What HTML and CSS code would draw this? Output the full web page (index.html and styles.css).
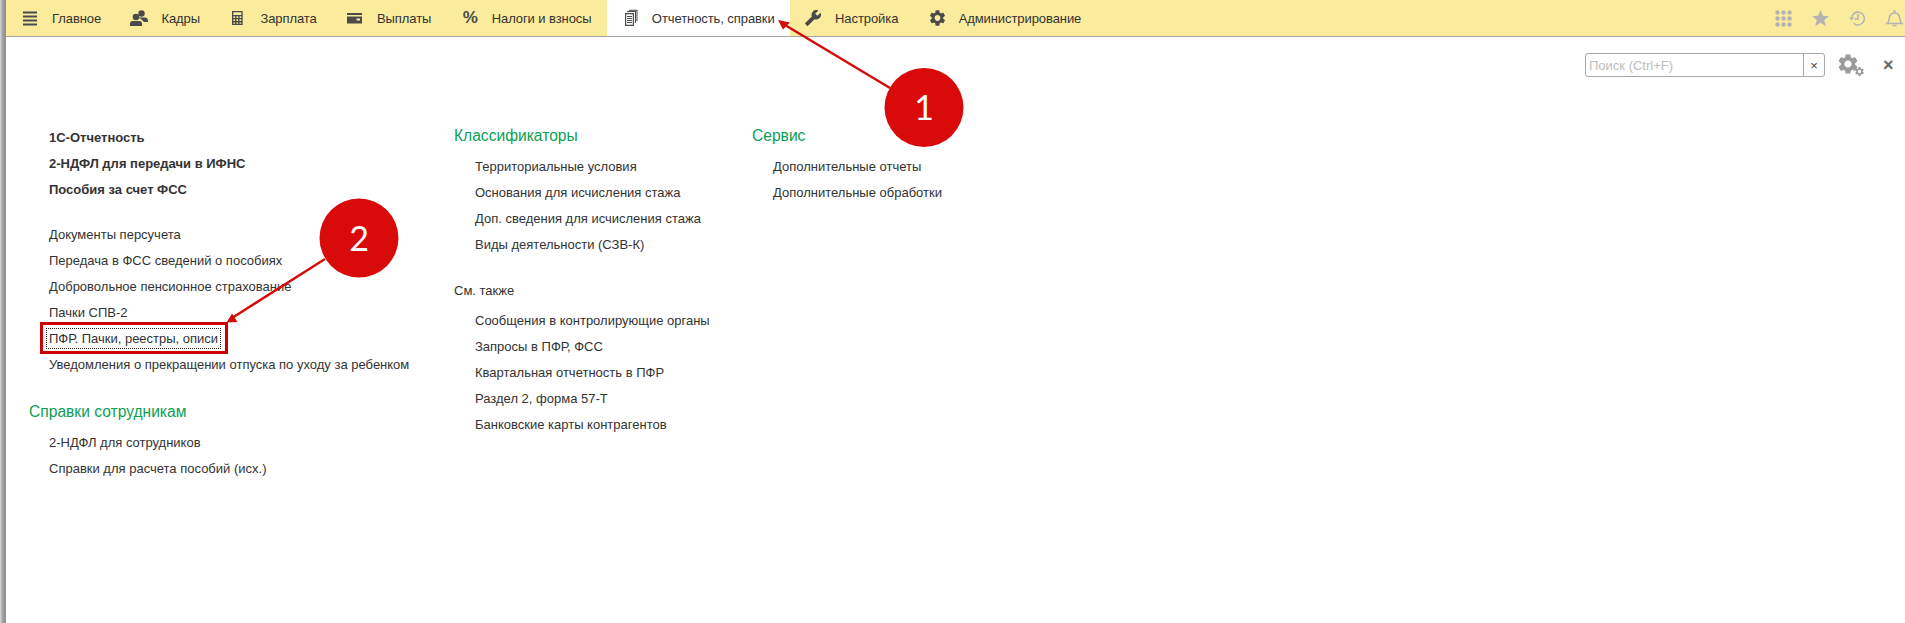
FILE: index.html
```html
<!DOCTYPE html>
<html lang="ru">
<head>
    <meta charset="UTF-8">
    <title>Отчетность, справки</title>
    <link rel="stylesheet" href="styles.css">
</head>
<body>
    <div class="side-strip"></div>
    <div class="app">
        <header class="topbar">
            <nav class="sections">
                <a class="section" href="#">
                    <svg class="section-icon" viewBox="2 0 16 16"><path d="M1 1.5h14v2H1zM1 5.5h14v2H1zM1 9.5h14v2H1zM1 13.5h14v2H1z"/></svg>
                    Главное
                </a>
                <a class="section" href="#">
                    <svg class="section-icon" viewBox="3 0 16 16"><circle cx="11.5" cy="3.5" r="3.2"/><path d="M8 7.5h7c2 0 3 1.5 3 3v1.5h-4L11 9z"/><circle cx="6" cy="7" r="3.3"/><path d="M0 16v-2.5C0 12 1 11 2.5 11h7c1.5 0 2.5 1 2.5 2.5V16z"/></svg>
                    Кадры
                </a>
                <a class="section" href="#">
                    <svg class="section-icon" viewBox="2 -1 18 18"><path fill-rule="evenodd" d="M2 0h12v16H2zM3.5 1.5v3h9v-3zM3.5 6v2h2V6zm3.5 0v2h2V6zm3.5 0v2h2V6zM3.5 9.5v2h2v-2zm3.5 0v2h2v-2zm3.5 0v2h2v-2zM3.5 13v1.5h2V13zm3.5 0v1.5h2V13zm3.5 0v1.5h2V13z"/></svg>
                    Зарплата
                </a>
                <a class="section" href="#">
                    <svg class="section-icon" viewBox="2 0 16 16"><path fill-rule="evenodd" d="M0 3h15v2H0zM0 6.500h15V13.500H0zM9.500 8.500v2h3.500v-2z"/></svg>
                    Выплаты
                </a>
                <a class="section" href="#">
                    <span class="section-icon percent">%</span>
                    Налоги и взносы
                </a>
                <a class="section active" href="#">
                    <svg class="section-icon" viewBox="2 0 16 16"><path fill-rule="evenodd" d="M3 3h9v13H3zM4.200 4.200v10.600h6.600V4.200zM5 6h5v1H5zM5 8h5v1H5zM5 10h5v1H5zM5 12h5v1H5z"/><path d="M5 1h9v12h-1V2H5zM7-.2h8.500V11h-1V.8H7z"/></svg>
                    Отчетность, справки
                </a>
                <a class="section" href="#">
                    <svg class="section-icon" viewBox="3.750 1 22 22"><path transform="matrix(-1 0 0 1 24 0)" d="M22.700 19l-9.100-9.100c.9-2.300.4-5-1.500-6.900-2-2-5-2.400-7.400-1.300L9 6 6 9 1.600 4.700C.4 7.100.9 10.100 2.900 12.100c1.900 1.900 4.600 2.400 6.900 1.500l9.100 9.100c.4.4 1 .4 1.400 0l2.300-2.300c.5-.4.5-1.100.1-1.400z"/></svg>
                    Настройка
                </a>
                <a class="section" href="#">
                    <svg class="section-icon" viewBox="3.900 2 20 20"><use href="#gear" width="24" height="24"/></svg>
                    Администрирование
                </a>
            </nav>
            <div class="quick-icons">
                <svg class="quick-icon" viewBox="0 0 17 17"><circle cx="2.500" cy="2.500" r="2.200"/><circle cx="8.500" cy="2.500" r="2.200"/><circle cx="14.500" cy="2.500" r="2.200"/><circle cx="2.500" cy="8.500" r="2.200"/><circle cx="8.500" cy="8.500" r="2.200"/><circle cx="14.500" cy="8.500" r="2.200"/><circle cx="2.500" cy="14.500" r="2.200"/><circle cx="8.500" cy="14.500" r="2.200"/><circle cx="14.500" cy="14.500" r="2.200"/></svg>
                <svg class="quick-icon" viewBox="0 0 17 17"><path d="M8.500 0l2.300 5.800 6.200.4-4.800 3.900 1.600 6.100-5.300-3.400-5.300 3.400 1.600-6.100L0 6.200l6.200-.4z"/></svg>
                <svg class="quick-icon" viewBox="0 0 17 17"><path class="line-icon" d="M2.600 8.500a6.400 6.400 0 1 1 2 4.700"/><path d="M0 7.500h5.200L2.600 10.600z"/><path class="line-icon" d="M9 4v5h-3.500"/></svg>
                <svg class="quick-icon" viewBox="0 0 17 17"><path class="line-icon" d="M1 13.500c1.500-1 2-2.500 2.200-5 .3-3.300 2-5.500 5.300-5.500s5 2.200 5.300 5.500c.2 2.500.7 4 2.200 5zM6.500 15.500h4"/><circle cx="8.500" cy="1.500" r="1.200"/></svg>
            </div>
        </header>

        <main class="page">
            <div class="toolbar">
                <div class="search">
                    <input class="search-input" type="text" placeholder="Поиск (Ctrl+F)">
                    <button class="search-clear" type="button">×</button>
                </div>
                <svg class="settings-icon" viewBox="0 0 26 22">
                    <use href="#gear" x="-2" y="-2" width="24" height="24"/>
                    <use href="#gear" x="16" y="12" width="11" height="11"/>
                </svg>
                <span class="close-page">×</span>
            </div>

            <div class="columns">
                <section class="first-column">
                    <ul class="links main-links">
                        <li><a href="#">1С-Отчетность</a></li>
                        <li><a href="#">2-НДФЛ для передачи в ИФНС</a></li>
                        <li><a href="#">Пособия за счет ФСС</a></li>
                    </ul>
                    <ul class="links">
                        <li><a href="#">Документы персучета</a></li>
                        <li><a href="#">Передача в ФСС сведений о пособиях</a></li>
                        <li><a href="#">Добровольное пенсионное страхование</a></li>
                        <li><a href="#">Пачки СПВ-2</a></li>
                        <li><a class="focused" href="#">ПФР. Пачки, реестры, описи</a></li>
                        <li><a href="#">Уведомления о прекращении отпуска по уходу за ребенком</a></li>
                    </ul>
                    <h3 class="group-title group-next">Справки сотрудникам</h3>
                    <ul class="links">
                        <li><a href="#">2-НДФЛ для сотрудников</a></li>
                        <li><a href="#">Справки для расчета пособий (исх.)</a></li>
                    </ul>
                </section>

                <section>
                    <h3 class="group-title">Классификаторы</h3>
                    <ul class="links">
                        <li><a href="#">Территориальные условия</a></li>
                        <li><a href="#">Основания для исчисления стажа</a></li>
                        <li><a href="#">Доп. сведения для исчисления стажа</a></li>
                        <li><a href="#">Виды деятельности (СЗВ-К)</a></li>
                    </ul>
                    <h4 class="see-also">См. также</h4>
                    <ul class="links">
                        <li><a href="#">Сообщения в контролирующие органы</a></li>
                        <li><a href="#">Запросы в ПФР, ФСС</a></li>
                        <li><a href="#">Квартальная отчетность в ПФР</a></li>
                        <li><a href="#">Раздел 2, форма 57-Т</a></li>
                        <li><a href="#">Банковские карты контрагентов</a></li>
                    </ul>
                </section>

                <section>
                    <h3 class="group-title">Сервис</h3>
                    <ul class="links">
                        <li><a href="#">Дополнительные отчеты</a></li>
                        <li><a href="#">Дополнительные обработки</a></li>
                    </ul>
                </section>
            </div>
        </main>
    </div>

    <!-- red callouts drawn on top of the screenshot -->
    <svg class="callouts" viewBox="0 0 1905 623">
        <rect class="callout-box" x="41.500" y="323.500" width="185" height="29"/>
        <path class="callout-line" d="M890 88L785 25"/>
        <path class="callout-head" d="M778 20L790 22.500L783 29.500z"/>
        <path class="callout-line" d="M325 259L232 318"/>
        <path class="callout-head" d="M226.500 322.500L232 313.500L237.500 322z"/>
        <circle class="callout-dot" cx="924" cy="107.500" r="39.500"/>
        <circle class="callout-dot" cx="359" cy="238" r="39.500"/>
        <text class="callout-num" x="924" y="120">1</text>
        <text class="callout-num" x="359" y="251">2</text>
    </svg>

    <svg class="defs" width="0" height="0">
        <symbol id="gear" viewBox="0 0 24 24"><path d="M19.140 12.940c.04-.3.06-.61.06-.94 0-.32-.02-.64-.07-.94l2.030-1.580c.18-.14.23-.41.12-.61l-1.920-3.320c-.12-.22-.37-.29-.59-.22l-2.390.96c-.5-.38-1.030-.7-1.620-.94l-.36-2.540c-.04-.24-.24-.41-.48-.41h-3.840c-.24 0-.43.17-.47.41l-.36 2.540c-.59.24-1.130.57-1.620.94l-2.390-.96c-.22-.08-.47 0-.59.22L2.740 8.870c-.12.21-.08.47.12.61l2.030 1.580c-.05.3-.09.63-.09.94s.02.64.07.94l-2.030 1.580c-.18.14-.23.41-.12.61l1.920 3.320c.12.22.37.29.59.22l2.390-.96c.5.38 1.030.7 1.620.94l.36 2.540c.05.24.24.41.48.41h3.840c.24 0 .44-.17.47-.41l.36-2.540c.59-.24 1.130-.56 1.620-.94l2.390.96c.22.08.47 0 .59-.22l1.920-3.320c.12-.22.07-.47-.12-.61l-2.010-1.580zM12 15.600c-1.980 0-3.600-1.620-3.600-3.600s1.620-3.600 3.600-3.600 3.600 1.620 3.600 3.600-1.620 3.600-3.600 3.600z"/></symbol>
    </svg>
</body>
</html>
```

FILE: styles.css
```css
html, body {
    height: 100%;
}
body {
    margin: 0;
    display: flex;
    overflow: hidden;
    background-color: white;
    color: #333;
    font-family: "Liberation Sans", Arial, sans-serif;
    font-size: 13px;
}
a {
    color: inherit;
    text-decoration: none;
}
ul {
    list-style-type: none;
    margin: 0;
    padding: 0;
}

/* Left window edge */
.side-strip {
    width: 6px;
    flex-shrink: 0;
    background: linear-gradient(to right, #d8d8d8, #9c9c9c 50%, #8e8e8e);
}
.app {
    flex: 1;
    min-width: 0;
}

/* Top sections bar */
.topbar {
    display: flex;
    justify-content: space-between;
    height: 36px;
    background-color: #fbec9d;
    border-bottom: 1px solid #a5a5a5;
}
.sections {
    display: flex;
    padding-left: 1px;
}
.section {
    display: flex;
    align-items: center;
    gap: 12px;
    padding: 0 15.350px 0 17px;
    color: #333;
    letter-spacing: -0.08px;
}
.section.active {
    background-color: white;
}
.section-icon {
    width: 16px;
    height: 16px;
    flex-shrink: 0;
    fill: #4a4a4a;
    overflow: visible;
}
.percent {
    margin-left: -1px;
    width: 17px;
    font-size: 17px;
    font-weight: bold;
    line-height: 16px;
    color: #4a4a4a;
}
.quick-icons {
    display: flex;
    align-items: center;
    gap: 20px;
    padding-right: 2px;
}
.quick-icon {
    width: 17px;
    height: 17px;
    fill: #b3b3b3;
    overflow: visible;
}
.line-icon {
    fill: none;
    stroke: #b3b3b3;
    stroke-width: 1.500;
}

/* Page body */
.page {
    padding: 16px 14px 0 23px;
}
.toolbar {
    display: flex;
    justify-content: flex-end;
    align-items: center;
    height: 24px;
}
.search {
    display: flex;
    width: 240px;
    height: 24px;
    box-sizing: border-box;
    border: 1px solid #a8a8a8;
    border-radius: 3px;
}
.search-input {
    flex: 1;
    min-width: 0;
    border: none;
    padding: 0 3px;
    background: none;
    font-family: inherit;
    font-size: 13px;
}
.search-input::placeholder {
    color: #bdbdbd;
}
.search-clear {
    width: 21px;
    padding: 0;
    border: none;
    border-left: 1px solid #a8a8a8;
    background: none;
    color: #444;
    font-family: inherit;
    font-size: 13px;
}
.settings-icon {
    width: 26px;
    height: 22px;
    margin-left: 13px;
    fill: #9a9a9a;
    overflow: visible;
}
.close-page {
    width: 8px;
    margin-left: 19px;
    color: #666;
    font-size: 18px;
    font-weight: bold;
    line-height: 16px;
    text-align: center;
}

/* Link columns */
.columns {
    display: grid;
    grid-template-columns: 425px 298px 1fr;
    margin-top: 46px;
}
.first-column {
    padding-top: 2px;
}
.links {
    padding-left: 21px;
}
.first-column .links {
    padding-left: 20px;
}
.links li {
    height: 26px;
    line-height: 26px;
    white-space: nowrap;
}
.main-links {
    margin-bottom: 19px;
    font-weight: bold;
}
.group-title {
    height: 26px;
    margin: 0 0 5px;
    color: #0a9f55;
    font-size: 15.600px;
    font-weight: normal;
    line-height: 26px;
}
.group-next {
    margin-top: 21px;
}
.see-also {
    height: 26px;
    margin: 20px 0 4px;
    font-size: 13px;
    font-weight: normal;
    line-height: 26px;
}
.focused {
    outline: 1px dotted #222;
    outline-offset: 2px;
}

/* Red callouts */
.callouts {
    position: absolute;
    top: 0;
    left: 0;
    width: 1905px;
    height: 623px;
    pointer-events: none;
}
.callout-box {
    fill: none;
    stroke: #cc0000;
    stroke-width: 3;
}
.callout-line {
    stroke: #d40b0b;
    stroke-width: 2.500;
}
.callout-head {
    fill: #d40b0b;
}
.callout-dot {
    fill: #d80a0a;
}
.callout-num {
    fill: white;
    font-family: Lato, sans-serif;
    font-size: 34px;
    text-anchor: middle;
}
.defs {
    position: absolute;
}
```
